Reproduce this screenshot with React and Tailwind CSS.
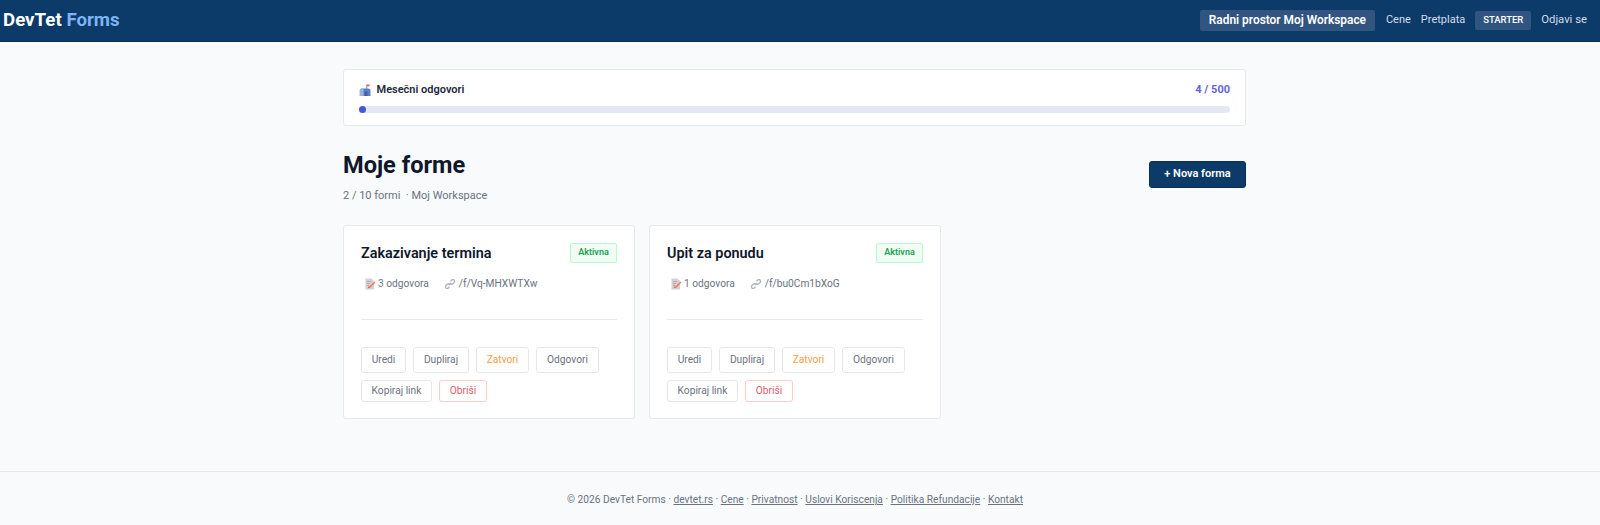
import React from "react";

const MailboxIcon = () => (
  <svg width="12" height="13" viewBox="0 0 12 13" className="shrink-0">
    <rect x="7.2" y="0.5" width="1.1" height="5" fill="#8a94c8" />
    <rect x="8" y="0.5" width="2.6" height="1.8" fill="#e4606d" />
    <path d="M2.5 4.5h7A2.2 2.2 0 0 1 11.5 6.7V12H.8V6.2a1.7 1.7 0 0 1 1.7-1.7z" fill="#5a7fc4" />
    <path d="M.8 6.4a1.9 1.9 0 0 1 3.8 0V12H.8z" fill="#9ab0e0" />
    <rect x="5.6" y="7.5" width="2.8" height="4.5" fill="#3f5ea8" />
  </svg>
);

const MemoIcon = () => (
  <svg width="12" height="12" viewBox="0 0 12 12" className="shrink-0">
    <path d="M1.5 0.5h6l2.5 2.5v8.5h-8.5z" fill="#d9cfd2" />
    <path d="M3 3.5h4M3 5.5h3M3 7.5h2" stroke="#a9a0a8" strokeWidth="0.8" />
    <path d="M10.5 3.6l1 1-5 5-2 .8.8-2z" fill="#ee7f4f" />
    <path d="M4.5 8.2l1.3 1.3-2 .8z" fill="#e8564a" />
  </svg>
);

const LinkIcon = () => (
  <svg width="12" height="12" viewBox="0 0 12 12" fill="none" stroke="#aeb4bd" strokeWidth="1.4" className="shrink-0">
    <path d="M5 7l2-2" />
    <path d="M6.5 3.2l1.2-1.2a2 2 0 0 1 2.4 0 2 2 0 0 1 0 2.5L8.8 5.8a1.9 1.9 0 0 1-2.4.1" />
    <path d="M5.5 8.8l-1.2 1.2a2 2 0 0 1-2.4 0 2 2 0 0 1 0-2.5l1.3-1.3a1.9 1.9 0 0 1 2.4-.1" />
  </svg>
);

const ActionButton = ({ label, width, height = "h-[26px]", className = "border-[#e5e7eb] text-[#6b7280]" }) => (
  <button className={`${width} ${height} rounded-[3px] border bg-white text-[10.2px] ${className}`}>{label}</button>
);

const FormCard = ({ title, answers, link }) => (
  <div className="w-[292px] h-[194px] bg-white border border-[#e5e9f0] rounded-[3px] px-[17px] pt-[17px]">
    <div className="flex justify-between items-start">
      <h3 className="text-[14.4px] font-semibold text-[#0f172a] leading-[20px] mt-[1px]">{title}</h3>
      <span className="h-[20px] w-[47px] flex items-center justify-center rounded-[2px] border border-[#bbf7d0] bg-[#f0fdf4] text-[9px] font-semibold text-[#22a052]">Aktivna</span>
    </div>
    <div className="flex items-center mt-[12px] text-[10.2px] text-[#6b7280] h-[16px]">
      <span className="flex items-center gap-[2px] ml-[3px]"><MemoIcon />{answers} odgovora</span>
      <span className="flex items-center gap-[3px] ml-[15px]"><LinkIcon />{link}</span>
    </div>
    <div className="border-t border-[#e5e9f0] mt-[27px]" />
    <div className="flex flex-wrap gap-[7px] mt-[27px]">
      <ActionButton label="Uredi" width="w-[45px]" />
      <ActionButton label="Dupliraj" width="w-[56px]" />
      <ActionButton label="Zatvori" width="w-[53px]" className="border-[#e5e7eb] text-[#f59e42]" />
      <ActionButton label="Odgovori" width="w-[63px]" />
      <ActionButton label="Kopiraj link" width="w-[71px]" height="h-[22px]" />
      <ActionButton label="Obriši" width="w-[48px]" height="h-[22px]" className="border-[#fecaca] text-[#dc5c6c]" />
    </div>
  </div>
);

const FooterLink = ({ children }) => <a className="underline">{children}</a>;

export default function App() {
  return (
    <div className="h-[525px] bg-[#f8fafc] font-['Roboto',sans-serif] overflow-hidden">
      <header className="h-[42px] bg-[#0c3a69] border-b border-[#0a2f57] flex items-center justify-between pl-[3px] pr-[13px]">
        <div className="text-[18.7px] font-bold text-white">
          DevTet <span className="text-[#7db4f5]">Forms</span>
        </div>
        <nav className="flex items-center text-[11px] text-[#d5deea]">
          <span className="h-[21px] w-[175px] flex items-center justify-center rounded-[2px] bg-[#2f5580] text-[11.9px] text-white font-semibold">Radni prostor Moj Workspace</span>
          <span className="ml-[11px]">Cene</span>
          <span className="ml-[10px]">Pretplata</span>
          <span className="h-[19px] w-[56px] flex items-center justify-center rounded-[2px] bg-[#2f5580] text-[9.5px] font-medium text-white ml-[10px]">STARTER</span>
          <span className="ml-[10px] text-[11.3px]">Odjavi se</span>
        </nav>
      </header>

      <div className="pr-[11px]">
        <main className="w-[903px] mx-auto pt-[27px]">
          <div className="h-[57px] bg-white border border-[#e5e9f0] rounded-[3px] px-[15px] pt-[12px]">
            <div className="flex items-center justify-between h-[16px]">
              <div className="flex items-center gap-[5.5px] text-[11px] font-semibold text-[#1e293b]">
                <MailboxIcon />
                Mesečni odgovori
              </div>
              <span className="text-[11px] font-bold text-[#6366d1]">4 / 500</span>
            </div>
            <div className="h-[7px] mt-[8px] rounded-full bg-[#e4e8f3]">
              <div className="h-[7px] w-[7px] rounded-full bg-[#4457d8]" />
            </div>
          </div>

          <div className="flex items-start justify-between mt-[23px]">
            <div>
              <h1 className="text-[23.6px] font-bold text-[#0f172a] leading-[32px]">Moje forme</h1>
              <p className="text-[11px] text-[#6b7280] mt-[7px] leading-[16px]">2 / 10 formi&nbsp; · Moj Workspace</p>
            </div>
            <button className="h-[27px] w-[97px] mt-[12px] rounded-[3px] bg-[#0c3a69] border border-[#0a2f57] text-[11px] font-semibold text-white">+ Nova forma</button>
          </div>

          <div className="flex gap-[14px] mt-[21px]">
            <FormCard title="Zakazivanje termina" answers={3} link="/f/Vq-MHXWTXw" />
            <FormCard title="Upit za ponudu" answers={1} link="/f/bu0Cm1bXoG" />
          </div>
        </main>
      </div>

      <footer className="border-t border-[#e5e9f0] mt-[52px] pt-[20px] pr-[10px] text-center text-[10.2px] text-[#6b7280]">
        © 2026 DevTet Forms · <FooterLink>devtet.rs</FooterLink> · <FooterLink>Cene</FooterLink> · <FooterLink>Privatnost</FooterLink> · <FooterLink>Uslovi Koriscenja</FooterLink> · <FooterLink>Politika Refundacije</FooterLink> · <FooterLink>Kontakt</FooterLink>
      </footer>
    </div>
  );
}
